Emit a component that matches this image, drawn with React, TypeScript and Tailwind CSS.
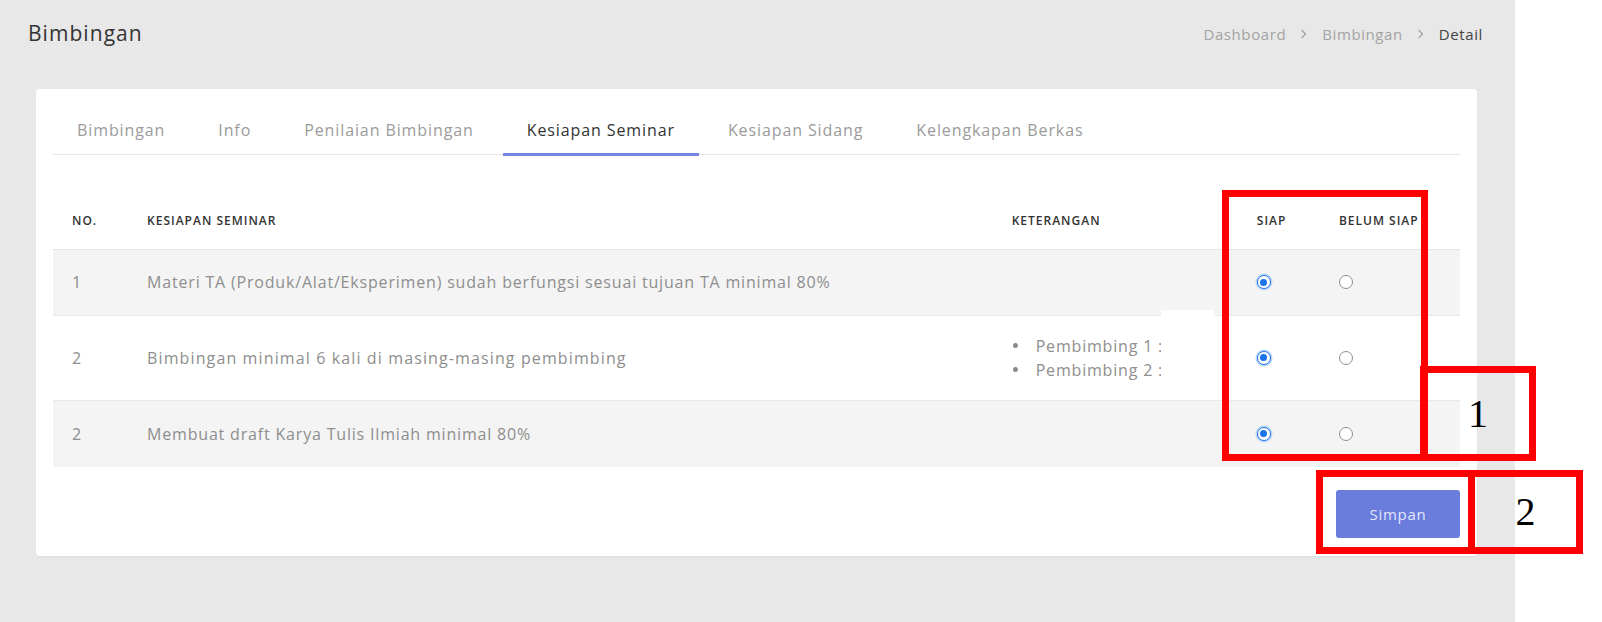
import React from "react";

const font = { fontFamily: '"Open Sans", "Noto Sans", sans-serif' };

const Radio = ({ checked }: { checked: boolean }) =>
  checked ? (
    <span className="inline-flex h-[14px] w-[14px] items-center justify-center rounded-full border-[1.5px] border-[#1a73e8] bg-white shadow-[0_0_0_1.5px_#bcd5f8]">
      <span className="h-[7px] w-[7px] rounded-full bg-[#1a73e8]" />
    </span>
  ) : (
    <span className="inline-block h-[14px] w-[14px] rounded-full border-[1.5px] border-[#8f8f8f] bg-white" />
  );

const Chevron = () => (
  <svg width="6" height="10" viewBox="0 0 6 10" className="mx-[15px]">
    <path d="M1 1.5 L4.5 5 L1 8.5" fill="none" stroke="#a0a0a0" strokeWidth="1.2" strokeLinecap="round" strokeLinejoin="round" />
  </svg>
);

const tabs = [
  "Bimbingan",
  "Info",
  "Penilaian Bimbingan",
  "Kesiapan Seminar",
  "Kesiapan Sidang",
  "Kelengkapan Berkas",
];

const RedBox = ({ className, children }: { className: string; children?: React.ReactNode }) => (
  <div className={`absolute flex items-center justify-center border-[7px] border-[#ff0000] ${className}`}>
    {children}
  </div>
);

export default function App() {
  return (
    <div className="relative flex h-[622px] w-[1602px] overflow-hidden bg-white" style={font}>
      <main className="flex h-full w-[1515px] flex-col bg-[#e8e8e8]">
        <header className="flex h-[68px] items-center justify-between pl-[28px] pr-[32px]">
          <h1 className="text-[21px] font-medium tracking-[0.05em] text-[#333333]">Bimbingan</h1>
          <nav className="flex items-center text-[15px] tracking-[0.04em]">
            <span className="text-[#a3a3a3]">Dashboard</span>
            <Chevron />
            <span className="text-[#a3a3a3]">Bimbingan</span>
            <Chevron />
            <span className="font-medium text-[#444444]">Detail</span>
          </nav>
        </header>

        <div className="pl-[36px] pr-[38px] pt-[21px]">
          <div className="rounded-[4px] bg-white px-[17px] pb-[18px] pt-[17px] shadow-[0_1px_2px_rgba(0,0,0,0.06)]">
            <div className="flex gap-[5px] border-b border-[#e5e5e5]">
              {tabs.map((t, i) => (
                <div
                  key={t}
                  className={`relative px-6 py-[13px] text-[16px] leading-[22px] tracking-[0.056em] ${
                    i === 3 ? "text-[#333333]" : "text-[#9b9b9b]"
                  }`}
                >
                  {t}
                  {i === 3 && <span className="absolute -bottom-[2px] left-0 right-0 h-[3px] bg-[#7386e0]" />}
                </div>
              ))}
            </div>

            <table className="mt-[38px] w-full table-fixed border-collapse">
              <colgroup>
                <col className="w-[75px]" />
                <col className="w-[864px]" />
                <col className="w-[245px]" />
                <col className="w-[82px]" />
                <col className="w-[140px]" />
              </colgroup>
              <thead>
                <tr className="h-[56px] border-b border-[#e6e6e6] text-left text-[12px] font-semibold tracking-[1px] text-[#333333]">
                  <th className="px-[19px] font-semibold">NO.</th>
                  <th className="px-[19px] font-semibold">KESIAPAN SEMINAR</th>
                  <th className="px-[19px] font-semibold">KETERANGAN</th>
                  <th className="px-[19px] font-semibold">SIAP</th>
                  <th className="whitespace-nowrap px-[19px] font-semibold">BELUM SIAP</th>
                </tr>
              </thead>
              <tbody className="text-[16px] tracking-[0.051em] text-[#8e8e8e]">
                <tr className="h-[66px] bg-[#f4f4f4]">
                  <td className="px-[19px]">1</td>
                  <td className="whitespace-nowrap px-[19px]">
                    Materi TA (Produk/Alat/Eksperimen) sudah berfungsi sesuai tujuan TA minimal 80%
                  </td>
                  <td className="px-[19px]" />
                  <td className="px-[19px] align-middle"><div className="flex"><Radio checked /></div></td>
                  <td className="px-[19px] align-middle"><div className="flex"><Radio checked={false} /></div></td>
                </tr>
                <tr className="h-[85px] border-t border-[#e9e9e9] bg-white">
                  <td className="px-[19px]">2</td>
                  <td className="whitespace-nowrap px-[19px] tracking-[0.07em]">Bimbingan minimal 6 kali di masing-masing pembimbing</td>
                  <td className="px-[19px]">
                    <ul className="flex flex-col">
                      {["Pembimbing 1 :", "Pembimbing 2 :"].map((p) => (
                        <li key={p} className="flex h-[24px] items-center whitespace-nowrap">
                          <span className="ml-[1px] mr-[18px] h-[5px] w-[5px] rounded-full bg-[#8a8a8a]" />
                          {p}
                        </li>
                      ))}
                    </ul>
                  </td>
                  <td className="px-[19px]"><div className="flex"><Radio checked /></div></td>
                  <td className="px-[19px]"><div className="flex"><Radio checked={false} /></div></td>
                </tr>
                <tr className="h-[67px] border-t border-[#e9e9e9] bg-[#f4f4f4]">
                  <td className="px-[19px]">2</td>
                  <td className="whitespace-nowrap px-[19px]">Membuat draft Karya Tulis Ilmiah minimal 80%</td>
                  <td className="px-[19px]" />
                  <td className="px-[19px]"><div className="flex"><Radio checked /></div></td>
                  <td className="px-[19px]"><div className="flex"><Radio checked={false} /></div></td>
                </tr>
              </tbody>
            </table>

            <div className="mt-[23px] flex justify-end">
              <button className="h-[48px] w-[124px] rounded-[3px] bg-[#6a7cdc] text-[15px] tracking-[0.05em] text-[#e4e7fb]">
                Simpan
              </button>
            </div>
          </div>
        </div>
      </main>

      {/* white patch artefact */}
      <div className="absolute left-[1161px] top-[310px] h-[80px] w-[53px] bg-white" />

      {/* annotation boxes */}
      <RedBox className="left-[1222px] top-[190px] h-[271px] w-[206px]" />
      <RedBox className="left-[1420px] top-[366px] h-[95px] w-[116px]">
        <span className="text-[40px] leading-none text-black" style={{ fontFamily: '"Liberation Serif", serif' }}>1</span>
      </RedBox>
      <RedBox className="left-[1316px] top-[470px] h-[84px] w-[159px]" />
      <RedBox className="left-[1468px] top-[470px] h-[84px] w-[115px]">
        <span className="text-[40px] leading-none text-black" style={{ fontFamily: '"Liberation Serif", serif' }}>2</span>
      </RedBox>
    </div>
  );
}
